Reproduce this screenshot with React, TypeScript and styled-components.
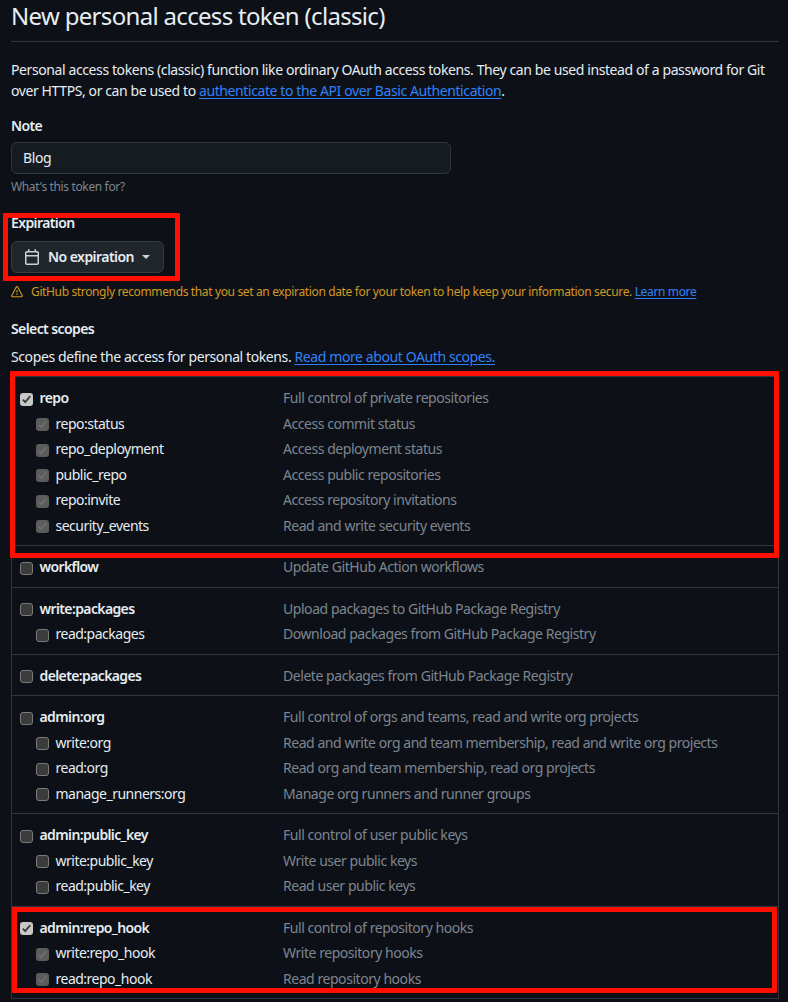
import React from 'react';
import styled, { createGlobalStyle } from 'styled-components';

const GlobalStyle = createGlobalStyle`
  html, body {
    margin: 0;
    height: 100%;
    overflow: hidden;
    background: #0d1117;
  }
  body {
    color: #e6edf3;
    font-family: 'Noto Sans', 'Open Sans', sans-serif;
    font-size: 14px;
  }
`;

const Page = styled.div`
  position: relative;
  height: 1002px;
  overflow: hidden;
  padding: 0 9px 0 11px;
  box-sizing: border-box;
`;

const Header = styled.div`
  height: 41px;
  border-bottom: 1px solid #30363d;
`;

const Title = styled.h1`
  margin: 0;
  font-size: 24px;
  line-height: 31px;
  font-weight: 400;
  letter-spacing: -0.68px;
`;

const Intro = styled.p`
  margin: 17px 0 0;
  line-height: 21px;
  letter-spacing: -0.4px;
  white-space: nowrap;
`;

const Link = styled.a`
  color: #2f81f7;
  text-decoration: underline;
  text-underline-offset: 2px;
`;

const Label = styled.div<{ $gap: number }>`
  margin-top: ${p => p.$gap}px;
  font-weight: 600;
  line-height: 19px;
  letter-spacing: -0.6px;
`;

const NoteInput = styled.div`
  margin-top: 7px;
  width: 440px;
  height: 32px;
  box-sizing: border-box;
  padding: 0 11px 2px;
  display: flex;
  align-items: center;
  background: #161b22;
  border: 1px solid #30363d;
  border-radius: 6px;
  letter-spacing: -0.41px;
`;

const Hint = styled.div`
  margin-top: 4px;
  font-size: 12px;
  line-height: 18px;
  color: #7d8590;
  letter-spacing: -0.36px;
`;

const SelectButton = styled.div`
  margin-top: 9px;
  width: 153px;
  height: 32px;
  box-sizing: border-box;
  padding: 0 12px;
  display: flex;
  align-items: center;
  background: #21262d;
  border: 1px solid #363b42;
  border-radius: 6px;
  font-weight: 600;
  letter-spacing: -0.55px;
  white-space: nowrap;
  svg {
    flex: none;
    fill: #c9d1d9;
  }
`;

const ButtonText = styled.span`
  margin-left: 8px;
  padding-bottom: 2px;
`;

const Caret = styled.span`
  margin-left: 8px;
  flex: none;
  border-top: 4px solid #c9d1d9;
  border-left: 4px solid transparent;
  border-right: 4px solid transparent;
`;

const Warning = styled.div`
  margin-top: 10px;
  display: flex;
  align-items: center;
  gap: 8px;
  font-size: 12px;
  line-height: 18px;
  color: #d29922;
  letter-spacing: -0.36px;
  white-space: nowrap;
  svg {
    flex: none;
    fill: #d29922;
  }
`;

const ScopesIntro = styled.p`
  margin: 8px 0 0;
  line-height: 21px;
  letter-spacing: -0.4px;
`;

const ScopeBox = styled.div`
  margin-top: 9px;
  border: 1px solid #30363d;
  border-bottom: 0;
`;

const ScopeGroup = styled.div`
  padding: 8px 8px 7px;
  border-bottom: 1px solid #30363d;
`;

const Row = styled.div<{ $child?: boolean }>`
  display: grid;
  grid-template-columns: 13px ${p => (p.$child ? 220 : 236)}px 1fr;
  column-gap: 7px;
  height: 25.5px;
  align-items: center;
  padding-left: ${p => (p.$child ? 16 : 0)}px;
  white-space: nowrap;
`;

const Box = styled.span<{ $checked?: boolean; $muted?: boolean }>`
  width: 13px;
  height: 13px;
  margin-top: 3px;
  box-sizing: border-box;
  border-radius: 3px;
  display: flex;
  align-items: center;
  justify-content: center;
  border: 1px solid ${p => (p.$checked ? 'transparent' : '#7a7a7a')};
  background: ${p => (p.$checked ? (p.$muted ? '#5c5c5c' : '#c8c8c8') : '#3b3b3b')};
  svg {
    fill: ${p => (p.$muted ? '#6e6e6e' : '#3b3b3b')};
  }
`;

const ScopeName = styled.span<{ $child?: boolean }>`
  font-weight: ${p => (p.$child ? 400 : 600)};
  letter-spacing: ${p => (p.$child ? -0.5 : -0.62)}px;
  margin-left: -0.5px;
`;

const ScopeDesc = styled.span`
  color: #7d8590;
  letter-spacing: -0.45px;
`;

const Annotation = styled.div<{ $x: number; $y: number; $w: number; $h: number }>`
  position: absolute;
  left: ${p => p.$x}px;
  top: ${p => p.$y}px;
  width: ${p => p.$w}px;
  height: ${p => p.$h}px;
  box-sizing: border-box;
  border: 5px solid #ff0f00;
  border-radius: 1px;
  pointer-events: none;
`;

type Scope = { name: string; desc: string };
type Group = { parent: Scope; checked?: boolean; children?: Scope[] };

const groups: Group[] = [
  {
    parent: { name: 'repo', desc: 'Full control of private repositories' },
    checked: true,
    children: [
      { name: 'repo:status', desc: 'Access commit status' },
      { name: 'repo_deployment', desc: 'Access deployment status' },
      { name: 'public_repo', desc: 'Access public repositories' },
      { name: 'repo:invite', desc: 'Access repository invitations' },
      { name: 'security_events', desc: 'Read and write security events' },
    ],
  },
  { parent: { name: 'workflow', desc: 'Update GitHub Action workflows' } },
  {
    parent: { name: 'write:packages', desc: 'Upload packages to GitHub Package Registry' },
    children: [{ name: 'read:packages', desc: 'Download packages from GitHub Package Registry' }],
  },
  { parent: { name: 'delete:packages', desc: 'Delete packages from GitHub Package Registry' } },
  {
    parent: { name: 'admin:org', desc: 'Full control of orgs and teams, read and write org projects' },
    children: [
      { name: 'write:org', desc: 'Read and write org and team membership, read and write org projects' },
      { name: 'read:org', desc: 'Read org and team membership, read org projects' },
      { name: 'manage_runners:org', desc: 'Manage org runners and runner groups' },
    ],
  },
  {
    parent: { name: 'admin:public_key', desc: 'Full control of user public keys' },
    children: [
      { name: 'write:public_key', desc: 'Write user public keys' },
      { name: 'read:public_key', desc: 'Read user public keys' },
    ],
  },
  {
    parent: { name: 'admin:repo_hook', desc: 'Full control of repository hooks' },
    checked: true,
    children: [
      { name: 'write:repo_hook', desc: 'Write repository hooks' },
      { name: 'read:repo_hook', desc: 'Read repository hooks' },
    ],
  },
];

const Check = () => (
  <svg width="11" height="11" viewBox="0 0 11 11">
    <path d="M4.3 9.4 1.2 6.3l1.3-1.3 1.7 1.7L8.6 1.6l1.3 1.2z" />
  </svg>
);

const CheckBox = ({ checked, muted }: { checked?: boolean; muted?: boolean }) => (
  <Box $checked={checked} $muted={muted}>
    {checked && <Check />}
  </Box>
);

const CalendarIcon = () => (
  <svg width="16" height="16" viewBox="0 0 16 16">
    <path d="M4.75 0a.75.75 0 0 1 .75.75V2h5V.75a.75.75 0 0 1 1.5 0V2h1.25c.966 0 1.75.784 1.75 1.75v10.5A1.75 1.75 0 0 1 13.25 16H2.75A1.75 1.75 0 0 1 1 14.25V3.75C1 2.784 1.784 2 2.75 2H4V.75A.75.75 0 0 1 4.75 0ZM2.5 7.5v6.75c0 .138.112.25.25.25h10.5a.25.25 0 0 0 .25-.25V7.5Zm10.75-4H2.75a.25.25 0 0 0-.25.25V6h11V3.75a.25.25 0 0 0-.25-.25Z" />
  </svg>
);

const AlertIcon = () => (
  <svg width="12" height="12" viewBox="0 0 16 16">
    <path d="M6.457 1.047c.659-1.234 2.427-1.234 3.086 0l6.082 11.378A1.75 1.75 0 0 1 14.082 15H1.918a1.75 1.75 0 0 1-1.543-2.575Zm1.763.707a.25.25 0 0 0-.44 0L1.698 13.132a.25.25 0 0 0 .22.368h12.164a.25.25 0 0 0 .22-.368Zm.53 3.996v2.5a.75.75 0 0 1-1.5 0v-2.5a.75.75 0 0 1 1.5 0ZM9 11a1 1 0 1 1-2 0 1 1 0 0 1 2 0Z" />
  </svg>
);

export default function App() {
  return (
    <Page>
      <GlobalStyle />
      <Header>
        <Title>New personal access token (classic)</Title>
      </Header>
      <Intro>
        Personal access tokens (classic) function like ordinary OAuth access tokens. They can be used instead of a password for Git
        <br />
        over HTTPS, or can be used to <Link>authenticate to the API over Basic Authentication</Link>.
      </Intro>

      <Label $gap={15}>Note</Label>
      <NoteInput>Blog</NoteInput>
      <Hint>What's this token for?</Hint>

      <Label $gap={17}>Expiration</Label>
      <SelectButton>
        <CalendarIcon />
        <ButtonText>No expiration</ButtonText>
        <Caret />
      </SelectButton>
      <Warning>
        <AlertIcon />
        <span>
          GitHub strongly recommends that you set an expiration date for your token to help keep your information secure.{' '}
          <Link>Learn more</Link>
        </span>
      </Warning>

      <Label $gap={18}>Select scopes</Label>
      <ScopesIntro>
        Scopes define the access for personal tokens. <Link>Read more about OAuth scopes.</Link>
      </ScopesIntro>

      <ScopeBox>
        {groups.map(group => (
          <ScopeGroup key={group.parent.name}>
            <Row>
              <CheckBox checked={group.checked} />
              <ScopeName>{group.parent.name}</ScopeName>
              <ScopeDesc>{group.parent.desc}</ScopeDesc>
            </Row>
            {group.children?.map(child => (
              <Row $child key={child.name}>
                <CheckBox checked={group.checked} muted />
                <ScopeName $child>{child.name}</ScopeName>
                <ScopeDesc>{child.desc}</ScopeDesc>
              </Row>
            ))}
          </ScopeGroup>
        ))}
      </ScopeBox>

      <Annotation $x={3} $y={213} $w={177} $h={68} />
      <Annotation $x={10} $y={371} $w={769} $h={187} />
      <Annotation $x={12} $y={907} $w={765} $h={86} />
    </Page>
  );
}
